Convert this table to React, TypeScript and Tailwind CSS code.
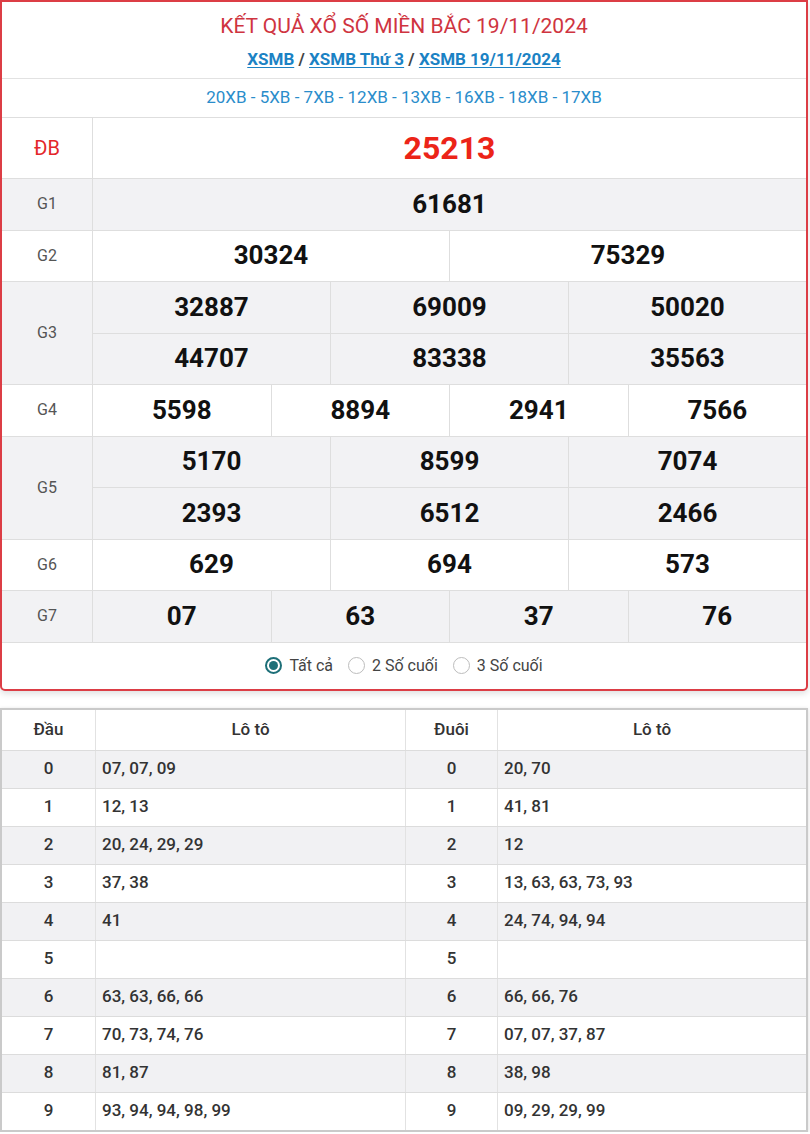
import React from 'react';

type PrizeRow = {
  label: string;
  cols: number;
  values: string[];
};

const prizes: PrizeRow[] = [
  { label: 'G1', cols: 1, values: ['61681'] },
  { label: 'G2', cols: 2, values: ['30324', '75329'] },
  { label: 'G3', cols: 3, values: ['32887', '69009', '50020', '44707', '83338', '35563'] },
  { label: 'G4', cols: 4, values: ['5598', '8894', '2941', '7566'] },
  { label: 'G5', cols: 3, values: ['5170', '8599', '7074', '2393', '6512', '2466'] },
  { label: 'G6', cols: 3, values: ['629', '694', '573'] },
  { label: 'G7', cols: 4, values: ['07', '63', '37', '76'] },
];

const loto = [
  { d: '0', dau: '07, 07, 09', duoi: '20, 70' },
  { d: '1', dau: '12, 13', duoi: '41, 81' },
  { d: '2', dau: '20, 24, 29, 29', duoi: '12' },
  { d: '3', dau: '37, 38', duoi: '13, 63, 63, 73, 93' },
  { d: '4', dau: '41', duoi: '24, 74, 94, 94' },
  { d: '5', dau: '', duoi: '' },
  { d: '6', dau: '63, 63, 66, 66', duoi: '66, 66, 76' },
  { d: '7', dau: '70, 73, 74, 76', duoi: '07, 07, 37, 87' },
  { d: '8', dau: '81, 87', duoi: '38, 98' },
  { d: '9', dau: '93, 94, 94, 98, 99', duoi: '09, 29, 29, 99' },
];

const Radio: React.FC<{ checked?: boolean; label: string }> = ({ checked, label }) => (
  <label className="flex items-center gap-[7px]">
    <span
      className={
        checked
          ? 'flex h-[17px] w-[17px] items-center justify-center rounded-full border-2 border-[#1d6f78]'
          : 'h-[17px] w-[17px] rounded-full border border-[#bdbdbd]'
      }
    >
      {checked && <span className="h-[9px] w-[9px] rounded-full bg-[#1d6f78]" />}
    </span>
    <span>{label}</span>
  </label>
);

export default function App() {
  return (
    <div className="w-[810px] bg-white font-['Roboto',sans-serif]">
      {/* Results box */}
      <div className="w-[808px] overflow-hidden rounded-b-[5px] border-2 border-[#dc3d45] bg-white shadow-[0_3px_6px_rgba(0,0,0,0.12)]">
        <div className="flex h-[76px] flex-col items-center pt-[9px]">
          <h1 className="text-[21px] leading-[30px] text-[#cf3440]">KẾT QUẢ XỔ SỐ MIỀN BẮC 19/11/2024</h1>
          <div className="mt-[7px] text-[17px] font-bold leading-[22px] text-[#444]">
            <a className="text-[#1b82c4] underline underline-offset-2">XSMB</a>
            {' / '}
            <a className="text-[#1b82c4] underline underline-offset-2">XSMB Thứ 3</a>
            {' / '}
            <a className="text-[#1b82c4] underline underline-offset-2">XSMB 19/11/2024</a>
          </div>
        </div>
        <div className="flex h-[39px] items-center justify-center border-t border-[#e2e2e2] text-[17px] text-[#2a8dcb]">
          20XB - 5XB - 7XB - 12XB - 13XB - 16XB - 18XB - 17XB
        </div>

        {/* ĐB */}
        <div className="flex h-[61px] border-t border-[#dedede]">
          <div className="flex w-[90px] items-center justify-center text-[20px] text-[#e3272a]">ĐB</div>
          <div className="flex flex-1 items-center justify-center border-l border-[#dedede] text-[32px] font-bold text-[#ec2418]">
            25213
          </div>
        </div>

        {prizes.map((p, i) => {
          const rows = p.values.length / p.cols;
          return (
            <div
              key={p.label}
              className={`flex border-t border-[#dedede] ${i % 2 === 0 ? 'bg-[#f2f2f4]' : 'bg-white'}`}
            >
              <div className="flex w-[90px] items-center justify-center text-[16px] text-[#555]">{p.label}</div>
              <div className="flex-1 border-l border-[#dedede]">
                {Array.from({ length: rows }, (_, r) => (
                  <div
                    key={r}
                    className={`flex ${r > 0 ? 'h-[51.5px] border-t border-[#dedede]' : 'h-[50.5px]'}`}
                  >
                    {p.values.slice(r * p.cols, (r + 1) * p.cols).map((v, c) => (
                      <div
                        key={c}
                        className={`flex flex-1 items-center justify-center text-[26px] font-bold text-[#111] ${c > 0 ? 'border-l border-[#dedede]' : ''}`}
                      >
                        {v}
                      </div>
                    ))}
                  </div>
                ))}
              </div>
            </div>
          );
        })}

        <div className="flex h-[47px] items-center justify-center gap-[15px] border-t border-[#dedede] text-[16px] text-[#444]">
          <Radio checked label="Tất cả" />
          <Radio label="2 Số cuối" />
          <Radio label="3 Số cuối" />
        </div>
      </div>

      {/* Loto table */}
      <div className="mt-[17px] w-[808px] border-2 border-[#cacaca] bg-white text-[17px] font-medium text-[#333] shadow-[0_1px_4px_rgba(0,0,0,0.15)]">
        <div className="flex h-[40px] items-center">
          <div className="flex h-full w-[93px] items-center justify-center">Đầu</div>
          <div className="flex h-full w-[310px] items-center justify-center border-l border-[#e2e2e2]">Lô tô</div>
          <div className="flex h-full w-[92px] items-center justify-center border-l border-[#e2e2e2]">Đuôi</div>
          <div className="flex h-full flex-1 items-center justify-center border-l border-[#e2e2e2]">Lô tô</div>
        </div>
        {loto.map((r, i) => (
          <div
            key={r.d}
            className={`flex h-[38px] border-t border-[#dcdcdc] ${i % 2 === 0 ? 'bg-[#f1f1f3]' : 'bg-white'}`}
          >
            <div className="flex w-[93px] items-center justify-center">{r.d}</div>
            <div className="flex w-[310px] items-center border-l border-[#e2e2e2] pl-[6px]">{r.dau}</div>
            <div className="flex w-[92px] items-center justify-center border-l border-[#e2e2e2]">{r.d}</div>
            <div className="flex flex-1 items-center border-l border-[#e2e2e2] pl-[6px]">{r.duoi}</div>
          </div>
        ))}
      </div>
    </div>
  );
}
